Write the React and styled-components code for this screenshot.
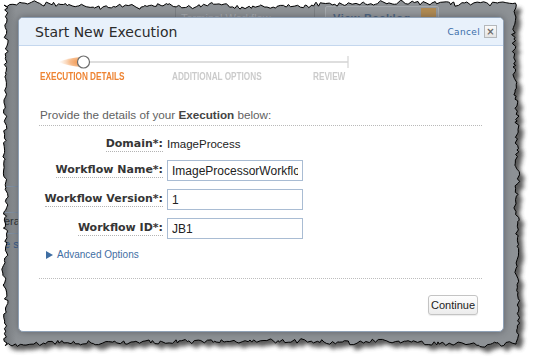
import React from "react";
import styled, { createGlobalStyle } from "styled-components";

const Global = createGlobalStyle`
  html, body { margin: 0; padding: 0; background: #fff; }
  body { width: 535px; height: 362px; overflow: hidden; }
`;

function rng(seed) {
  return () => {
    seed |= 0;
    seed = (seed + 0x6d2b79f5) | 0;
    let t = Math.imul(seed ^ (seed >>> 15), 1 | seed);
    t = (t + Math.imul(t ^ (t >>> 7), 61 | t)) ^ t;
    return ((t ^ (t >>> 14)) >>> 0) / 4294967296;
  };
}

function makeEdge() {
  const r = rng(11);
  const pts = [];
  const j = (a) => (r() - 0.5) * a;
  let w = 0;
  const wave = () => {
    w += (r() - 0.5) * 1.8;
    w = Math.max(-2.5, Math.min(2.5, w));
    return w;
  };
  for (let x = 4; x < 516; x += 1.2 + r() * 3) pts.push([x, 5 + wave() + j(4)]);
  for (let y = 5; y < 343; y += 1.2 + r() * 3) pts.push([516 + wave() + j(4), y]);
  for (let x = 516; x > 4; x -= 1.2 + r() * 3) pts.push([x, 343 + wave() + j(4)]);
  for (let y = 343; y > 5; y -= 1.2 + r() * 3) pts.push([4 + wave() + j(4), y]);
  return pts;
}

const EDGE = makeEdge();
const SVG_POINTS = EDGE.map(([x, y]) => `${x.toFixed(1)},${y.toFixed(1)}`).join(" ");
const CLIP = `polygon(${EDGE.map(([x, y]) => `${x.toFixed(1)}px ${y.toFixed(1)}px`).join(",")})`;

const Stage = styled.div`
  position: relative;
  width: 535px;
  height: 362px;
  background: #fff;
  overflow: hidden;
`;

const Layer = styled.svg`
  position: absolute;
  left: 0;
  top: 0;
  width: 535px;
  height: 362px;
  pointer-events: none;
`;

const Screen = styled.div`
  position: relative;
  width: 535px;
  height: 362px;
  box-sizing: border-box;
  padding: 17px 0 0 18px;
  display: flex;
  align-items: flex-start;
  background: linear-gradient(to right, #55595d 0px, #7e8286 9px, #8d9195 16px, #8d9195 100%);
`;

const Backdrop = styled.div`
  position: absolute;
  inset: 0;
  pointer-events: none;
`;

const BgLine = styled.div`
  position: absolute;
  background: ${(p) => p.$c || "#7c8084"};
`;

const BgText = styled.div`
  position: absolute;
  font-family: "Liberation Sans", Arial, sans-serif;
  font-size: 11px;
  white-space: nowrap;
  color: ${(p) => p.$c || "#2e3236"};
  font-weight: ${(p) => (p.$b ? 700 : 400)};
  letter-spacing: ${(p) => (p.$b ? "0.6px" : "0")};
`;

const BgBox = styled.div`
  position: absolute;
  border: 1px solid #a6aaae;
  background: #94989c;
  border-radius: 2px;
`;

const Modal = styled.div`
  position: relative;
  width: 486px;
  height: 315px;
  box-sizing: border-box;
  background: #fff;
  border: 1px solid #8fa1b6;
  border-radius: 5px;
  box-shadow: 0 0 7px rgba(40, 45, 50, 0.45);
  display: flex;
  flex-direction: column;
  overflow: hidden;
`;

const Header = styled.div`
  height: 27px;
  flex: none;
  background: #e8f1fb;
  border-bottom: 1px solid #c4d7ee;
  display: flex;
  align-items: center;
  justify-content: space-between;
  padding: 0 6px 0 16px;
`;

const Title = styled.div`
  font-family: "DejaVu Sans", Verdana, sans-serif;
  font-size: 14px;
  color: #2b2b2b;
  margin-top: 1px;
`;

const HeaderActions = styled.div`
  display: flex;
  align-items: center;
  gap: 4px;
`;

const CancelLink = styled.span`
  font-family: "DejaVu Sans", Verdana, sans-serif;
  font-size: 9px;
  letter-spacing: 0.35px;
  color: #3a6eaa;
`;

const CloseBox = styled.span`
  width: 11px;
  height: 11px;
  border: 1px solid #b4b8bc;
  background: linear-gradient(#fafafa, #e4e4e4);
  display: flex;
  align-items: center;
  justify-content: center;
  color: #6a6a6a;
  font-family: "DejaVu Sans", sans-serif;
  font-size: 10px;
  font-weight: 700;
  line-height: 1;
`;

const Body = styled.div`
  flex: 1;
  padding: 9px 21px 0 20px;
  display: flex;
  flex-direction: column;
`;

const StepLabels = styled.div`
  display: grid;
  grid-template-columns: 132px 141px auto;
  margin-top: 3px;
  padding-left: 1px;
`;

const StepLabel = styled.div`
  font-family: "Liberation Sans", Arial, sans-serif;
  font-weight: 700;
  font-size: 10px;
  line-height: 10px;
  white-space: nowrap;
  transform: scaleX(0.82);
  transform-origin: left center;
  color: ${(p) => (p.$active ? "#ee8433" : "#cbcbcb")};
`;

const Intro = styled.div`
  margin-top: 26px;
  padding-left: 1px;
  padding-bottom: 3px;
  border-bottom: 1px dotted #b9b9b9;
  font-family: "Liberation Sans", Arial, sans-serif;
  font-size: 11.7px;
  line-height: 14px;
  color: #626262;
  b { color: #444; }
`;

const Form = styled.div`
  margin-top: 11px;
  display: grid;
  grid-template-columns: 124px 136px;
  column-gap: 4px;
  row-gap: 8px;
  align-items: center;
`;

const FieldLabel = styled.span`
  justify-self: end;
  font-family: "DejaVu Sans", Verdana, sans-serif;
  font-weight: 700;
  font-size: 11px;
  line-height: 13px;
  color: #353535;
  padding-bottom: 1px;
  border-bottom: 1px dotted #b3b3b3;
  white-space: nowrap;
`;

const Value = styled.span`
  font-family: "Liberation Sans", Arial, sans-serif;
  font-size: 11.5px;
  line-height: 13px;
  color: #222;
`;

const TextInput = styled.input`
  box-sizing: border-box;
  width: 136px;
  height: 21px;
  margin: 0;
  padding: 0 4px;
  border: 1px solid #a9bcd3;
  background: #fff;
  font-family: "Liberation Sans", Arial, sans-serif;
  font-size: 12px;
  color: #222;
  outline: none;
`;

const Advanced = styled.div`
  margin-top: 10px;
  margin-left: 7px;
  display: flex;
  align-items: center;
  gap: 4px;
  font-family: "Liberation Sans", Arial, sans-serif;
  font-size: 10px;
  line-height: 12px;
  color: #3f6ea3;
`;

const Triangle = styled.span`
  width: 0;
  height: 0;
  border-top: 4px solid transparent;
  border-bottom: 4px solid transparent;
  border-left: 7px solid #3f6ea3;
`;

const Divider = styled.div`
  margin-top: 17px;
  border-top: 1px dotted #bdbdbd;
`;

const Footer = styled.div`
  margin-top: 16px;
  display: flex;
  justify-content: flex-end;
  padding-right: 4px;
`;

const Button = styled.button`
  box-sizing: border-box;
  width: 50px;
  height: 20px;
  padding: 0;
  border: 1px solid #c4c4c4;
  border-radius: 3px;
  background: linear-gradient(#fefefe, #ececec);
  font-family: "Liberation Sans", Arial, sans-serif;
  font-size: 11px;
  color: #222;
  box-shadow: 0 1px 1px rgba(0, 0, 0, 0.08);
`;

function Stepper() {
  return (
    <svg width="312" height="14" viewBox="0 0 312 14" style={{ display: "block", marginLeft: "-1px" }}>
      <defs>
        <linearGradient id="trail" x1="0" x2="1" y1="0" y2="0">
          <stop offset="0" stopColor="#f6dcc4" />
          <stop offset="0.6" stopColor="#f3b37c" />
          <stop offset="1" stopColor="#ee7f2a" />
        </linearGradient>
        <radialGradient id="glow" cx="1" cy="0.5" r="1">
          <stop offset="0" stopColor="#ef8634" stopOpacity="1" />
          <stop offset="0.5" stopColor="#f4a565" stopOpacity="0.75" />
          <stop offset="1" stopColor="#f8d2b0" stopOpacity="0" />
        </radialGradient>
      </defs>
      <line x1="46" y1="7" x2="310" y2="7" stroke="#dedede" strokeWidth="2" />
      <line x1="310" y1="1" x2="310" y2="13" stroke="#d4d4d4" strokeWidth="1.2" />
      <line x1="1" y1="7" x2="44" y2="7" stroke="url(#trail)" strokeWidth="2" />
      <path d="M20 7 Q32 2.5 44 2 L44 12 Q32 11.5 20 7 Z" fill="url(#glow)" />
      <circle cx="45.5" cy="7" r="6" fill="#fff" stroke="#6d6d6d" strokeWidth="1.2" />
    </svg>
  );
}

export default function App() {
  return (
    <Stage>
      <Global />
      <Layer>
        <defs>
          <filter id="sh" x="-5%" y="-5%" width="110%" height="110%">
            <feGaussianBlur stdDeviation="2.2" />
          </filter>
        </defs>
        <polygon points={SVG_POINTS} transform="translate(5,5)" fill="#3c3c3c" opacity="0.85" filter="url(#sh)" />
      </Layer>
      <Screen style={{ clipPath: CLIP }}>
        <Backdrop>
          <BgLine style={{ left: 175, top: 4, width: 1, height: 14 }} />
          <BgText $c="#a9adb1" style={{ left: 181, top: 12 }}>Terminal Workflow</BgText>
          <BgLine style={{ left: 314, top: 4, width: 1, height: 14 }} />
          <BgBox style={{ left: 325, top: 6, width: 112, height: 16 }} />
          <BgText $b $c="#4d6480" style={{ left: 333, top: 12 }}>View Backlog</BgText>
          <BgLine $c="#b08a52" style={{ left: 421, top: 8, width: 15, height: 12 }} />
          <BgLine $c="#7f8ea0" style={{ left: 0, top: 186, width: 20, height: 1 }} />
          <BgLine $c="#7f8ea0" style={{ left: 0, top: 212, width: 20, height: 1 }} />
          <BgText style={{ left: 4, top: 215 }}>era</BgText>
          <BgLine $c="#7f8ea0" style={{ left: 0, top: 233, width: 20, height: 1 }} />
          <BgText $c="#34598a" style={{ left: 4, top: 238 }}>e s</BgText>
        </Backdrop>
        <Modal>
          <Header>
            <Title>Start New Execution</Title>
            <HeaderActions>
              <CancelLink>Cancel</CancelLink>
              <CloseBox>×</CloseBox>
            </HeaderActions>
          </Header>
          <Body>
            <Stepper />
            <StepLabels>
              <StepLabel $active>EXECUTION DETAILS</StepLabel>
              <StepLabel>ADDITIONAL OPTIONS</StepLabel>
              <StepLabel>REVIEW</StepLabel>
            </StepLabels>
            <Intro>
              Provide the details of your <b>Execution</b> below:
            </Intro>
            <Form>
              <FieldLabel>Domain*:</FieldLabel>
              <Value>ImageProcess</Value>
              <FieldLabel>Workflow Name*:</FieldLabel>
              <TextInput defaultValue="ImageProcessorWorkflow" readOnly />
              <FieldLabel>Workflow Version*:</FieldLabel>
              <TextInput defaultValue="1" readOnly />
              <FieldLabel>Workflow ID*:</FieldLabel>
              <TextInput defaultValue="JB1" readOnly />
            </Form>
            <Advanced>
              <Triangle />
              <span>Advanced Options</span>
            </Advanced>
            <Divider />
            <Footer>
              <Button>Continue</Button>
            </Footer>
          </Body>
        </Modal>
      </Screen>
      <Layer>
        <polygon points={SVG_POINTS} fill="none" stroke="#000" strokeWidth="1" />
      </Layer>
    </Stage>
  );
}
